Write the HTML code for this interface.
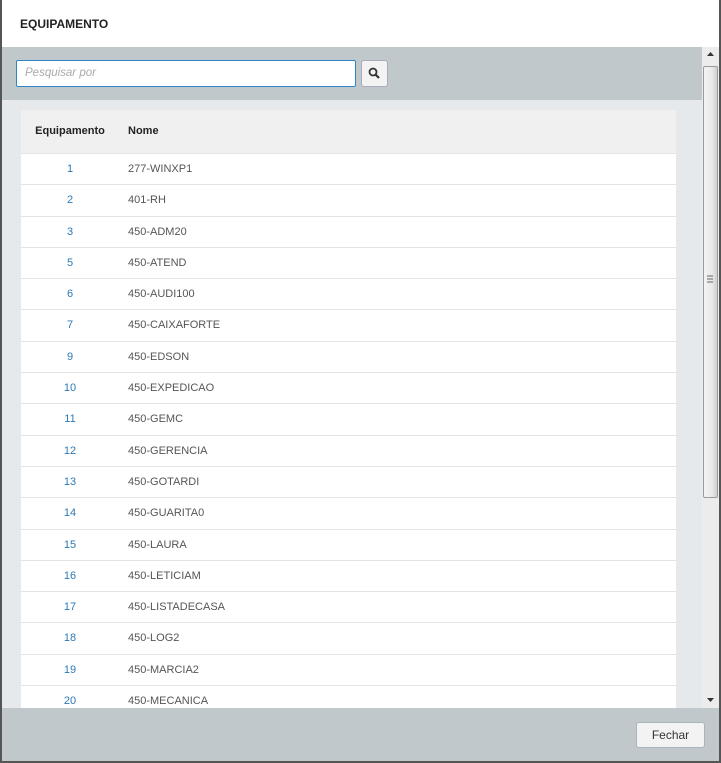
<!DOCTYPE html><html><head><style>
body{margin:0;width:721px;height:763px;background:#555;position:relative;overflow:hidden;font-family:"Liberation Sans",sans-serif}
.dlg{position:absolute;left:2px;top:0;width:717px;height:761px;background:#fff}
.hd{position:absolute;left:0;top:0;width:717px;height:47px;background:#fff}
.hd span{position:absolute;left:18px;top:17px;font-size:12px;font-weight:bold;color:#222}
.tb{position:absolute;left:0;top:47px;width:700px;height:53px;background:#c1c8cb}
.inp{position:absolute;left:14px;top:13px;width:338px;height:25px;border:1px solid #2f86c6;border-radius:2px;background:#fff}
.inp span{position:absolute;left:8px;top:6px;font-size:11.5px;font-style:italic;color:#aaa}
.sb{position:absolute;left:359px;top:13px;width:25px;height:25px;border:1px solid #aab;border-radius:3px;background:#f3f3f3}
.ct{position:absolute;left:0;top:100px;width:700px;height:608px;background:#e5e9ec;overflow:hidden}
.tbl{position:absolute;left:19px;top:10px;width:655px;background:#fff;font-size:11px}
.r{position:relative;height:31.3px;box-sizing:border-box;border-top:1px solid #e4e4e4;line-height:30px;color:#555}
.r.h{height:43px;background:#f0f0f0;border:0;line-height:42px;font-weight:bold;color:#222}
.r .a{position:absolute;left:0;width:98px;text-align:center;color:#2a79b5}
.r.h .a{color:#222}
.r .b{position:absolute;left:107px}
.scr{position:absolute;left:700px;top:47px;width:17px;height:661px;background:#ececec}
.th{position:absolute;left:1px;top:19px;width:13px;height:430px;background:linear-gradient(90deg,#f4f4f4,#e9e9e9 60%,#cfcfcf);border:1px solid #9a9a9a;border-radius:2px}
.ft{position:absolute;left:0;top:708px;width:717px;height:53px;background:#c1c8cb}
.btn{position:absolute;left:634px;top:14px;width:67px;height:24px;border:1px solid #a9b4bd;border-radius:3px;background:#f3f3f3;font-size:12px;color:#333;text-align:center;line-height:24px}
</style></head><body>
<div class="dlg">
<div class="hd"><span>EQUIPAMENTO</span></div>
<div class="tb"><div class="inp"><span>Pesquisar por</span></div>
<div class="sb"><svg width="25" height="25"><circle cx="11" cy="11" r="3.5" fill="none" stroke="#333" stroke-width="1.8"/><path d="M13.5 13.5l3.5 3.5" stroke="#333" stroke-width="2.2"/></svg></div></div>
<div class="ct"><div class="tbl">
<div class="r h"><span class="a">Equipamento</span><span class="b">Nome</span></div>
<div class="r"><span class="a">1</span><span class="b">277-WINXP1</span></div>
<div class="r"><span class="a">2</span><span class="b">401-RH</span></div>
<div class="r"><span class="a">3</span><span class="b">450-ADM20</span></div>
<div class="r"><span class="a">5</span><span class="b">450-ATEND</span></div>
<div class="r"><span class="a">6</span><span class="b">450-AUDI100</span></div>
<div class="r"><span class="a">7</span><span class="b">450-CAIXAFORTE</span></div>
<div class="r"><span class="a">9</span><span class="b">450-EDSON</span></div>
<div class="r"><span class="a">10</span><span class="b">450-EXPEDICAO</span></div>
<div class="r"><span class="a">11</span><span class="b">450-GEMC</span></div>
<div class="r"><span class="a">12</span><span class="b">450-GERENCIA</span></div>
<div class="r"><span class="a">13</span><span class="b">450-GOTARDI</span></div>
<div class="r"><span class="a">14</span><span class="b">450-GUARITA0</span></div>
<div class="r"><span class="a">15</span><span class="b">450-LAURA</span></div>
<div class="r"><span class="a">16</span><span class="b">450-LETICIAM</span></div>
<div class="r"><span class="a">17</span><span class="b">450-LISTADECASA</span></div>
<div class="r"><span class="a">18</span><span class="b">450-LOG2</span></div>
<div class="r"><span class="a">19</span><span class="b">450-MARCIA2</span></div>
<div class="r"><span class="a">20</span><span class="b">450-MECANICA</span></div>
<div class="r"><span class="a">21</span><span class="b">450-X</span></div>
</div></div>
<div class="scr"><svg width="17" height="661" style="position:absolute;left:0;top:0"><path d="M5 9l3.5-4 3.5 4z" fill="#333"/><path d="M5 651l3.5 4 3.5-4z" fill="#333"/></svg><div class="th"><svg width="13" height="12" style="position:absolute;left:0;top:207px"><path d="M3 2h6M3 5h6M3 8h6" stroke="#666"/></svg></div></div>
<div class="ft"><div class="btn">Fechar</div></div>
</div>
</body></html>
